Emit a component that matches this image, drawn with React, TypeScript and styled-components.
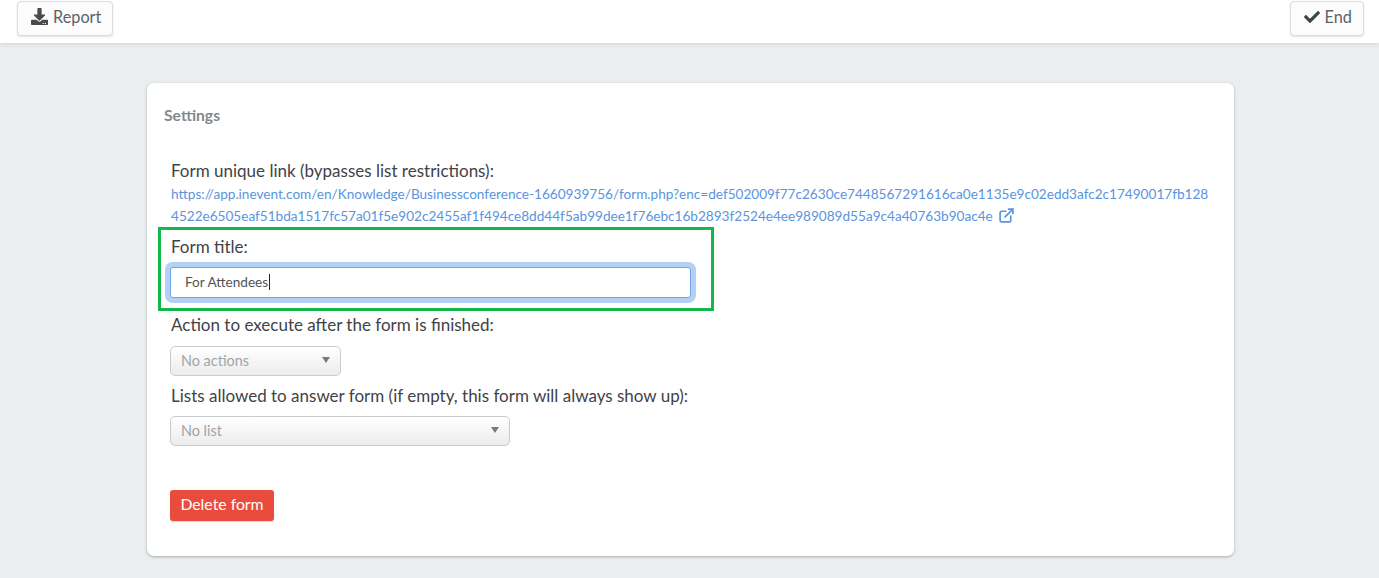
import { createGlobalStyle } from "styled-components"
import styled from "styled-components"
import { FaCheck, FaDownload } from "react-icons/fa"
import { FiExternalLink } from "react-icons/fi"

const GlobalStyle = createGlobalStyle`
	html, body {
		margin: 0;
		padding: 0;
		background: #ebeeef;
		font-family: Lato, "Liberation Sans", sans-serif;
	}
`

function App() {
	return (
		<>
			<GlobalStyle />
			<Page>
				<TopBar>
					<ToolButton><FaDownload size={17} color="#4a4a4a" /> <span>Report</span></ToolButton>
					<ToolButton><FaCheck size={16} color="#3f4347" /> <span>End</span></ToolButton>
				</TopBar>
				<Card>
					<CardTitle>Settings</CardTitle>
					<CardBody>
						<Label>Form unique link (bypasses list restrictions):</Label>
						<FormLink>
							https://app.inevent.com/en/Knowledge/Businessconference-1660939756/form.php?enc=def502009f77c2630ce7448567291616ca0e1135e9c02edd3afc2c17490017fb128
							<br />
							4522e6505eaf51bda1517fc57a01f5e902c2455af1f494ce8dd44f5ab99dee1f76ebc16b2893f2524e4ee989089d55a9c4a40763b90ac4e <FiExternalLink size={17} strokeWidth={2.4} />
						</FormLink>
						<Highlight>
							<HighlightLabel>Form title:</HighlightLabel>
							<TitleInput>For Attendees<Caret /></TitleInput>
						</Highlight>
						<Label>Action to execute after the form is finished:</Label>
						<Select $width={171} $top={10}>No actions<Arrow /></Select>
						<ListLabel>Lists allowed to answer form (if empty, this form will always show up):</ListLabel>
						<Select $width={340} $top={9}>No list<Arrow /></Select>
						<DeleteButton>Delete form</DeleteButton>
					</CardBody>
				</Card>
			</Page>
		</>
	)
}

const Page = styled.div`
	display: flex;
	flex-direction: column;
	height: 578px;
	overflow: hidden;
`

const TopBar = styled.div`
	display: flex;
	justify-content: space-between;
	align-items: flex-start;
	flex-shrink: 0;
	height: 43px;
	padding: 1px 15px 0 17px;
	box-sizing: border-box;
	background: #ffffff;
	box-shadow: 0 1px 5px rgba(0, 0, 0, 0.12);
`

const ToolButton = styled.div`
	display: flex;
	align-items: center;
	gap: 5px;
	height: 35px;
	padding: 0 11px 4px 13px;
	box-sizing: border-box;
	border: 1px solid #dddddd;
	border-radius: 4px;
	background: #fcfcfc;
	box-shadow: 0 1px 2px rgba(0, 0, 0, 0.12);
	color: #5f6468;
	font-size: 16.3px;
`

const Card = styled.div`
	flex-shrink: 0;
	width: 1087px;
	height: 473px;
	margin: 40px 0 0 147px;
	box-sizing: border-box;
	padding: 22px 17px 0;
	border-radius: 7px;
	background: #ffffff;
	box-shadow: 0 1px 3px rgba(0, 0, 0, 0.28);
`

const CardTitle = styled.div`
	color: #84898d;
	font-size: 15.7px;
	font-weight: 700;
	line-height: 20px;
`

const CardBody = styled.div`
	display: flex;
	flex-direction: column;
	align-items: flex-start;
	padding: 35px 0 0 6px;
`

const Label = styled.div`
	padding-left: 1px;
	color: #3f4347;
	font-size: 17px;
	line-height: 22px;
`

const ListLabel = styled(Label)`
	margin-top: 9px;
`

const FormLink = styled.div`
	padding-left: 1px;
	color: #5a94e0;
	font-size: 13.6px;
	line-height: 21.5px;
	margin-top: 2px;
	white-space: nowrap;

	svg {
		vertical-align: -3px;
		margin-left: 2px;
	}
`

const Highlight = styled.div`
	width: 556px;
	height: 84px;
	margin: 0 0 3px -12px;
	padding: 6px 9px 0 9px;
	box-sizing: border-box;
	border: 3px solid #12b84c;
`

const HighlightLabel = styled(Label)`
	margin-bottom: 9px;
`

const TitleInput = styled.div`
	display: flex;
	align-items: center;
	width: 521px;
	height: 31px;
	padding: 0 0 2px 14px;
	box-sizing: border-box;
	border: 1px solid #6fa5ea;
	border-radius: 3px;
	background: #ffffff;
	box-shadow: 0 0 0 5px #b3d0f5;
	color: #4f5458;
	font-size: 13.6px;
`

const Caret = styled.span`
	display: inline-block;
	width: 1px;
	height: 16px;
	margin-left: 1px;
	background: #222222;
`

const Select = styled.div<{ $width: number; $top: number }>`
	position: relative;
	display: flex;
	align-items: center;
	width: ${props => props.$width}px;
	height: 30px;
	margin-top: ${props => props.$top}px;
	padding: 0 0 2px 10px;
	box-sizing: border-box;
	border: 1px solid #c6cdd2;
	border-radius: 5px;
	background: linear-gradient(#ffffff, #ececec);
	color: #a0a4a8;
	font-size: 14.4px;
`

const Arrow = styled.span`
	position: absolute;
	right: 10px;
	top: 10px;
	width: 0;
	height: 0;
	border-left: 4px solid transparent;
	border-right: 4px solid transparent;
	border-top: 6px solid #77797c;
`

const DeleteButton = styled.div`
	display: flex;
	align-items: center;
	justify-content: center;
	width: 104px;
	height: 31px;
	margin-top: 44px;
	padding-bottom: 4px;
	box-sizing: border-box;
	border-radius: 3px;
	background: #e94c3d;
	box-shadow: 0 1px 1px rgba(0, 0, 0, 0.15);
	color: #ffffff;
	font-size: 15.8px;
`

export default App
